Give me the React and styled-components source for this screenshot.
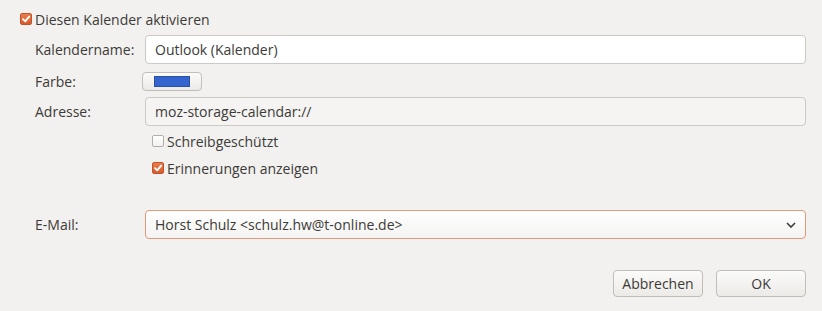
import React from "react";
import styled, { createGlobalStyle } from "styled-components";

const GlobalStyle = createGlobalStyle`
    body {
        margin: 0;
        background: #f2f1f0;
        font-family: "Open Sans", "Noto Sans", sans-serif;
        font-size: 14px;
        color: #3c3b37;
    }
`;

function Check({ checked }) {
    return (
        <Box checked={checked}>
            {checked && (
                <svg width="10" height="10" viewBox="0 0 10 10">
                    <path d="M2 5.2 L4.2 7.4 L8.2 2.6" fill="none" stroke="#fff" strokeWidth="1.8" strokeLinecap="round" strokeLinejoin="round" />
                </svg>
            )}
        </Box>
    );
}

function App() {
    return (
        <Dialog>
            <GlobalStyle />
            <CheckRow>
                <Check checked />
                <span>Diesen Kalender aktivieren</span>
            </CheckRow>
            <Form>
                <Label>Kalendername:</Label>
                <Field value="Outlook (Kalender)" />

                <Label top={8}>Farbe:</Label>
                <ColorButton>
                    <Swatch />
                </ColorButton>

                <Label top={6}>Adresse:</Label>
                <Field value="moz-storage-calendar://" disabled />

                <span />
                <Options>
                    <CheckRow small>
                        <Check />
                        <span>Schreibgeschützt</span>
                    </CheckRow>
                    <CheckRow small>
                        <Check checked />
                        <span>Erinnerungen anzeigen</span>
                    </CheckRow>
                </Options>

                <Label top={32}>E-Mail:</Label>
                <Select>
                    <span>Horst Schulz &lt;schulz.hw@t-online.de&gt;</span>
                    <svg width="10" height="6" viewBox="0 0 10 6">
                        <path d="M1 1 L5 5 L9 1" fill="none" stroke="#3c3b37" strokeWidth="1.6" />
                    </svg>
                </Select>
            </Form>
            <Buttons>
                <Button>Abbrechen</Button>
                <Button>OK</Button>
            </Buttons>
        </Dialog>
    );
}

const Dialog = styled.div`
    width: 822px;
    height: 311px;
    box-sizing: border-box;
    padding: 7px 16px 0 20px;
`;

const CheckRow = styled.label`
    display: flex;
    align-items: center;
    gap: 3px;
    height: ${p => (p.small ? 20 : 24)}px;
`;

const Box = styled.span`
    width: 12px;
    height: 12px;
    box-sizing: border-box;
    border-radius: 2px;
    display: flex;
    align-items: center;
    justify-content: center;
    border: 1px solid ${p => (p.checked ? "#c4532a" : "#b3afa9")};
    background: ${p => (p.checked ? "linear-gradient(#ea7d4f, #d95a2b)" : "linear-gradient(#ffffff, #f1f0ee)")};
`;

const Form = styled.div`
    display: grid;
    grid-template-columns: 110px 1fr;
    align-items: center;
    margin: 4px 0 0 15px;
`;

const Label = styled.div`
    margin-top: ${p => p.top || 0}px;
`;

const Field = styled.input.attrs({ readOnly: true })`
    height: 29px;
    box-sizing: border-box;
    margin-top: ${p => (p.disabled ? 6 : 0)}px;
    padding: 0 9px;
    border: 1px solid #cdc9c4;
    border-radius: 4px;
    background: ${p => (p.disabled ? "#f5f4f3" : "#ffffff")};
    font: inherit;
    color: #3c3b37;
    outline: none;
`;

const ColorButton = styled.div`
    margin: 8px 0 0 -3px;
    width: 60px;
    height: 19px;
    box-sizing: border-box;
    border: 1px solid #c2bdb6;
    border-radius: 4px;
    background: linear-gradient(#fbfbfa, #eceae7);
    display: flex;
    align-items: center;
    justify-content: center;
`;

const Swatch = styled.span`
    width: 34px;
    height: 9px;
    background: #3465cf;
    border: 1px solid #2a4fa8;
`;

const Options = styled.div`
    display: flex;
    flex-direction: column;
    gap: 7px;
    margin: 5px 0 0 7px;
`;

const Select = styled.div`
    margin-top: 32px;
    height: 29px;
    box-sizing: border-box;
    padding: 0 9px 0 9px;
    border: 1px solid #e39a78;
    border-radius: 4px;
    background: linear-gradient(#ffffff, #f4f3f1);
    display: flex;
    align-items: center;
    justify-content: space-between;
`;

const Buttons = styled.div`
    display: flex;
    justify-content: flex-end;
    gap: 13px;
    margin-top: 31px;
`;

const Button = styled.button`
    width: 90px;
    height: 27px;
    border: 1px solid #c2bdb6;
    border-radius: 4px;
    background: linear-gradient(#fbfbfa, #eceae7);
    font: inherit;
    color: #3c3b37;
`;

export default App;
